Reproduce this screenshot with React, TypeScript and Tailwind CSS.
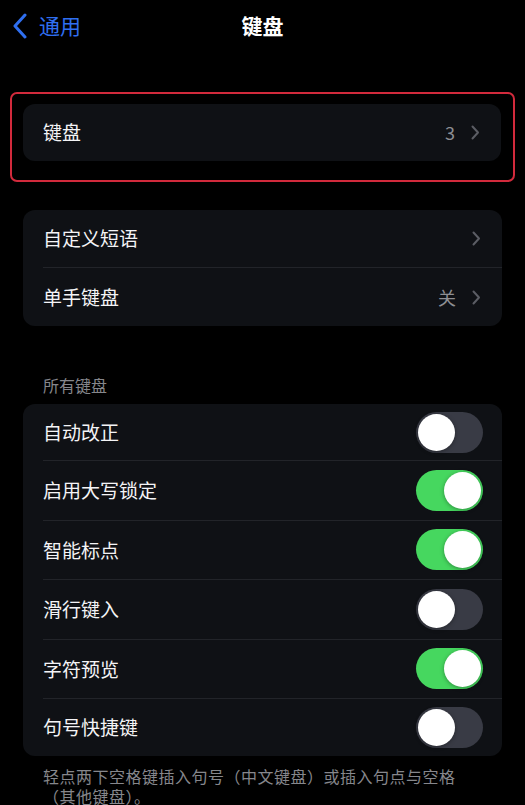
import React from "react";

const font = { fontFamily: '"Noto Sans CJK SC", "Noto Sans", sans-serif' };

function Chevron() {
  return (
    <svg width="9" height="15" viewBox="0 0 9 15" className="shrink-0">
      <path d="M1.5 1.5 L7 7.5 L1.5 13.5" fill="none" stroke="#5b5d64" strokeWidth="2" strokeLinecap="round" strokeLinejoin="round" />
    </svg>
  );
}

function Toggle({ on }: { on: boolean }) {
  return (
    <div
      className={`flex h-[41px] w-[67px] items-center rounded-full p-[2px] ${
        on ? "justify-end bg-[#46d75f]" : "justify-start bg-[#393b45]"
      }`}
    >
      <div className="h-[37px] w-[37px] rounded-full bg-white shadow-[0_1px_4px_rgba(0,0,0,0.35)]" />
    </div>
  );
}

function LinkRow({ label, value, last }: { label: string; value?: string; last?: boolean }) {
  return (
    <div className="flex h-[58px] items-center pl-5">
      <div className={`flex h-full flex-1 items-center pr-[21px] ${last ? "" : "border-b border-[#222429]"}`}>
        <span className="flex-1 text-[19px] text-[#f4f4f6]">{label}</span>
        {value && <span className="mr-4 text-[18px] text-[#8d8e93]">{value}</span>}
        <Chevron />
      </div>
    </div>
  );
}

function ToggleRow({ label, on, edge, last }: { label: string; on: boolean; edge: boolean; last?: boolean }) {
  return (
    <div className={`flex items-center pl-5 ${edge ? "h-[57px]" : "h-[59.5px]"}`}>
      <div className={`flex h-full flex-1 items-center pr-[19px] ${last ? "" : "border-b border-[#222429]"}`}>
        <span className="flex-1 text-[19px] text-[#f4f4f6]">{label}</span>
        <Toggle on={on} />
      </div>
    </div>
  );
}

export default function App() {
  const toggles: [string, boolean][] = [
    ["自动改正", false],
    ["启用大写锁定", true],
    ["智能标点", true],
    ["滑行键入", false],
    ["字符预览", true],
    ["句号快捷键", false],
  ];

  return (
    <div className="h-[805px] w-[525px] overflow-hidden bg-black" style={font}>
      <div className="relative flex h-[52px] items-center">
        <div className="flex items-center pl-3 text-[#2f6ff0]">
          <svg width="16" height="26" viewBox="0 0 16 26">
            <path d="M13 2 L3 13 L13 24" fill="none" stroke="#2f6ff0" strokeWidth="3" strokeLinecap="round" strokeLinejoin="round" />
          </svg>
          <span className="ml-[11px] text-[21px]">通用</span>
        </div>
        <div className="absolute left-0 right-0 text-center text-[21px] font-bold text-white">键盘</div>
      </div>

      <div className="mx-[10px] mt-[40px] w-[505px] rounded-[7px] border-2 border-[#d22a3c] pb-[19px] pl-[11px] pr-[12px] pt-[10px]">
        <div className="overflow-hidden rounded-[12px] bg-[#0f1115]">
          <div className="flex h-[57px] items-center pl-5 pr-[21px]">
            <span className="flex-1 text-[19px] text-[#f4f4f6]">键盘</span>
            <span className="mr-4 text-[18px] text-[#8d8e93]">3</span>
            <Chevron />
          </div>
        </div>
      </div>

      <div className="mx-[23px] mt-[28px] overflow-hidden rounded-[12px] bg-[#0f1115]">
        <LinkRow label="自定义短语" />
        <LinkRow label="单手键盘" value="关" last />
      </div>

      <div className="ml-[43px] mt-[49px] text-[16px] leading-[20px] text-[#86878c]">所有键盘</div>

      <div className="mx-[23px] mt-[9px] overflow-hidden rounded-[12px] bg-[#0f1115]">
        {toggles.map(([label, on], i) => (
          <ToggleRow
            key={label}
            label={label}
            on={on}
            edge={i === 0 || i === toggles.length - 1}
            last={i === toggles.length - 1}
          />
        ))}
      </div>

      <div className="ml-[43px] mt-[10px] text-[16px] leading-[20px] tracking-[0.5px] text-[#86878c]">
        <p>轻点两下空格键插入句号（中文键盘）或插入句点与空格</p>
        <p>（其他键盘）。</p>
      </div>
    </div>
  );
}
